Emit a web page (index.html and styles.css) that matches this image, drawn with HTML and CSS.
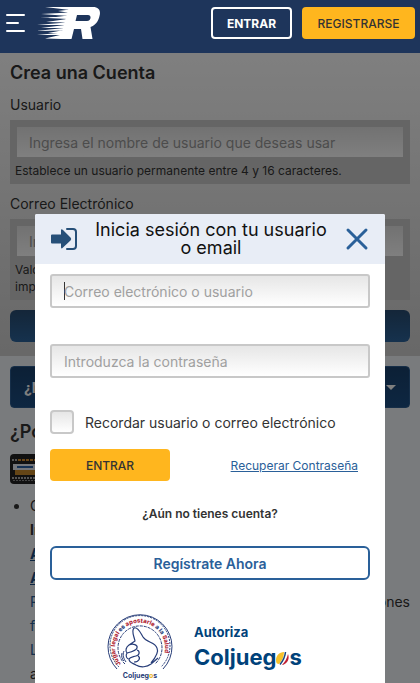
FILE: index.html
```html
<!DOCTYPE html>
<html lang="es">
<head>
    <meta charset="UTF-8">
    <meta name="viewport" content="width=device-width, initial-scale=1.0">
    <title>Crea una Cuenta</title>
    <link rel="stylesheet" href="styles.css">
</head>
<body>
    <header class="topbar">
        <button type="button" class="menu-btn" aria-label="Menú">
            <svg width="20" height="20" viewBox="0 0 20 20" stroke="#fff" stroke-width="2" stroke-linecap="round">
                <path d="M2 2h17M2 10h11M2 18h17"/>
            </svg>
        </button>
        <a href="#" class="logo" aria-label="Inicio">
            <svg width="64" height="32" viewBox="0 0 64 32">
                <path fill="#fff" fill-rule="evenodd" d="M33 0H57C63 0 65 4 63.500 9C62.500 14 59.500 18 54.500 20L56.500 32H46.500L45 22H38L35.500 32H24ZM41 8L39.500 14H51C55 14 56 8 52 8Z"/>
                <path fill="#fff" d="M9 0H35L34 3ZM22 4L34 2.500V6ZM5 7L33 5.500V9ZM12 11L32 8.500V12ZM4 10.500L31 9.500V11ZM10 15L31 12V15.500ZM1 18L30 15.500V18ZM5 21L29 18V21ZM0 24L28 21V23.500ZM12 26L28 23V26ZM1 28L27 25.500V28ZM9 31.500L26 27.500V32Z"/>
            </svg>
        </a>
        <button type="button" class="btn-outline">ENTRAR</button>
        <button type="button" class="btn-yellow btn-signup">REGISTRARSE</button>
    </header>

    <main>
        <form class="register">
            <h1>Crea una Cuenta</h1>

            <label for="reg-user">Usuario</label>
            <div class="field">
                <input type="text" id="reg-user" placeholder="Ingresa el nombre de usuario que deseas usar">
                <p>Establece un usuario permanente entre 4 y 16 caracteres.</p>
            </div>

            <label for="reg-email">Correo Electrónico</label>
            <div class="field">
                <input type="email" id="reg-email" placeholder="Ingresa tu correo">
                <p>Valoramos tu privacidad. Te enviaremos información<br>importante a este correo.</p>
            </div>

            <button type="submit" class="btn-next">Continuar</button>
        </form>

        <section class="info">
            <button type="button" class="accordion">
                <span>¿Necesitas ayuda?</span>
                <svg width="10" height="5" viewBox="0 0 10 5"><path fill="#fff" d="M0 0H10L5 5Z"/></svg>
            </button>
            <h2>¿Por qué jugar aquí?</h2>
            <svg class="promo" width="60" height="30" viewBox="0 0 60 30">
                <rect width="60" height="30" rx="4" fill="#222"/>
                <path stroke="#aaa" stroke-width="2" stroke-dasharray="2 1" d="M2 6h6M2 24h48"/>
                <path stroke="#888" stroke-width="1" stroke-dasharray="2 1" d="M3 26.500h44"/>
                <path stroke="#d08a30" stroke-width="2" stroke-dasharray="3 1" d="M8 6h36"/>
                <path fill="#e9edf4" d="M3 10h50v6H3z"/>
                <path fill="#c98a2c" d="M5 16h46v5H5z"/>
                <path stroke="#2a62a8" stroke-width="2" d="M7 13h16"/>
            </svg>
            <ul>
                <li>
                    Crea tu cuenta
                    <strong>Ingresa ya</strong>
                    <a href="#" class="strong">Apuestas</a>
                    <a href="#" class="strong">Acumulados</a>
                    <span class="split"><a href="#">Revisa</a> <span>promociones</span></span>
                    <a href="#">fútbol</a>
                    <a href="#">Ligas</a>
                    <span>apuestas</span>
                </li>
            </ul>
        </section>
    </main>

    <div class="overlay"></div>

    <div class="modal" role="dialog" aria-labelledby="login-title">
        <div class="modal-head">
            <svg width="26" height="22" viewBox="0 0 26 22">
                <path fill="#264f78" d="M1 6.500H10V2.500Q10 .500 12 2L19.500 9.500Q21 11 19.500 12.500L12 19.500Q10 21.500 10 19V15.500H1Q0 15.500 0 14.500V7.500Q0 6.500 1 6.500Z"/>
                <path fill="none" stroke="#264f78" stroke-width="2" stroke-linecap="round" d="M16 1H22Q25 1 25 4V18Q25 21 22 21H16"/>
            </svg>
            <h2 id="login-title">Inicia sesión con tu usuario o email</h2>
            <button type="button" class="close-btn" aria-label="Cerrar">
                <svg width="24" height="24" viewBox="0 0 24 24" stroke="#2a6099" stroke-width="3" stroke-linecap="round">
                    <path d="M3 3L21 21M21 3L3 21"/>
                </svg>
            </button>
        </div>

        <form class="login">
            <input type="text" class="text-input active" placeholder="Correo electrónico o usuario" aria-label="Correo electrónico o usuario">
            <input type="password" class="text-input" placeholder="Introduzca la contraseña" aria-label="Introduzca la contraseña">
            <div class="remember">
                <input type="checkbox" id="remember">
                <label for="remember">Recordar usuario o correo electrónico</label>
            </div>
            <div class="actions">
                <button type="submit" class="btn-yellow btn-login">ENTRAR</button>
                <a href="#">Recuperar Contraseña</a>
            </div>
            <p class="question">¿Aún no tienes cuenta?</p>
            <button type="button" class="btn-register">Regístrate Ahora</button>
        </form>

        <div class="license">
            <svg class="seal" width="66" height="68" viewBox="0 0 66 68">
                <defs>
                    <path id="ring" d="M14 50A25 25 0 1 1 52 50"/>
                </defs>
                <g fill="none" stroke="#273d78">
                    <path d="M10 55A32 32 0 1 1 56 55" stroke-width="1"/>
                    <path d="M12 53A30 30 0 1 1 54 53" stroke-width="1" stroke-dasharray="2 1"/>
                    <path d="M18 50A22 22 0 1 1 48 50" stroke-width="1" stroke-dasharray="3 1"/>
                    <path stroke-width="1.200" stroke-linejoin="round" d="M27 14C24 17 27 22 28 27L22 31C19 33 18 37 20 39C18 42 20 45 22 45C22 49 26 49 29 51C34 54 40 53 44 50L51 44M27 14C31 12 34 20 36 23C40 29 48 28 50 34C52 38 49 43 44 49M22 31C26 29 31 31 30 34C29 37 24 38 20 39M30 36C33 37 33 41 29 42C26 43 23 43 22 45M31 42C34 44 32 48 27 48"/>
                    <path d="M17 37C15 41 17 45 19 48M15 39C14 42 15 45 17 47"/>
                </g>
                <text class="seal-text" fill="#b01f35"><textPath href="#ring">Jugar legal <tspan fill="#273d78">es</tspan> apostarle <tspan fill="#273d78">a la</tspan> Salud</textPath></text>
                <text class="seal-name" x="33" y="64" text-anchor="middle" fill="#273d78">Coljueg<tspan fill="#e8b21c">o</tspan>s</text>
            </svg>
            <div class="license-text">
                <div class="authorized">Autoriza</div>
                <div class="brand">Coljueg<svg width="13" height="13" viewBox="0 0 13 13">
                    <path fill="#f6c12c" d="M8 0C3 0 0 4 0 8C0 11 1 12 3 12C6 9 8 5 8 0Z"/>
                    <path fill="none" stroke="#174780" stroke-width="1.500" d="M9.500 0C9 5 7 9 4 12.500"/>
                    <path fill="#c02032" d="M12 2C14 7 11 12 6 13C9 10 11 6 12 2Z"/>
                </svg>s</div>
            </div>
        </div>
    </div>
</body>
</html>
```
FILE: styles.css
```css
* {
    box-sizing: border-box;
}
body {
    font-family: Inter, "Open Sans", sans-serif;
    margin: 0;
    height: 100vh;
    overflow: hidden;
    background: #f3f6fa;
    color: #333;
}
h1, h2, p, ul {
    margin: 0;
}
button, input {
    font-family: inherit;
}
button {
    border: none;
    padding: 0;
    cursor: pointer;
}

/* header */
.topbar {
    display: flex;
    align-items: center;
    height: 53px;
    padding: 0 5px 7px;
    background: #1e355b;
}
.menu-btn {
    display: flex;
    background: none;
}
.logo {
    display: flex;
    margin: 0 auto 0 11px;
}
.btn-outline {
    width: 81px;
    height: 32px;
    margin-right: 10px;
    background: none;
    border: 2px solid #fff;
    border-radius: 4px;
    color: #fff;
    font-size: 12px;
    font-weight: 700;
}
.btn-yellow {
    height: 32px;
    background: #ffb61e;
    border-radius: 4px;
    color: #333;
    font-size: 12px;
    font-weight: 500;
}
.btn-signup {
    width: 113px;
}

/* register form */
.register {
    padding: 10px 10px 14px;
    background: linear-gradient(#fff, #d0d0d0);
}
.register h1 {
    font-size: 18px;
    line-height: 20px;
    font-weight: 600;
    margin-bottom: 12px;
}
.register label {
    display: block;
    font-size: 14px;
    line-height: 20px;
    margin-bottom: 5px;
}
.field {
    padding: 7px 7px 5px;
    margin-bottom: 10px;
    background: #cbcbcb;
}
.field input {
    display: block;
    width: 100%;
    height: 30px;
    padding: 0 12px;
    border: none;
    background: linear-gradient(#e4e4e4, #fff);
    font-size: 14px;
}
.field p {
    margin: 5px -2px 0;
    font-size: 12px;
    line-height: 17px;
}
.field input::placeholder {
    color: #999;
}
.btn-next {
    width: 100%;
    height: 32px;
    border-radius: 6px;
    background: linear-gradient(#284c72, #2c649c);
    color: #fff;
}

/* info */
.info {
    padding: 10px;
}
.accordion {
    display: flex;
    align-items: center;
    justify-content: space-between;
    width: 100%;
    height: 42px;
    padding: 0 13px;
    border: 1px solid #2c5d90;
    border-radius: 4px;
    background: linear-gradient(#18406c, #1c4e84);
    color: #fff;
    font-size: 14px;
    font-weight: 700;
}
.info h2 {
    margin: 12px 0 10px;
    font-size: 18px;
    line-height: 24px;
    font-weight: 600;
}
.promo {
    display: block;
}
.info ul {
    margin-top: 10px;
    padding-left: 20px;
    font-size: 14px;
    line-height: 24px;
}
.info li > * {
    display: block;
}
.info a {
    color: #2a6099;
    text-decoration: none;
}
.info a.strong {
    color: #1c4e84;
    font-weight: 700;
    text-decoration: underline;
}
.info .split {
    display: flex;
    justify-content: space-between;
}

/* login modal */
.overlay {
    position: fixed;
    inset: 53px 0 0;
    background: rgba(0, 0, 0, 0.5);
}
.modal {
    position: fixed;
    inset: 214px 35px 0;
    background: #fff;
    border-radius: 2px 2px 0 0;
    overflow: hidden;
}
.modal-head {
    display: flex;
    align-items: center;
    height: 50px;
    padding: 0 16px;
    background: #e8edf6;
}
.modal-head h2 {
    flex: 1;
    padding: 0 16px;
    color: #111;
    font-size: 18px;
    line-height: 18px;
    font-weight: 400;
    text-align: center;
}
.close-btn {
    display: flex;
    background: none;
}
.login {
    padding: 10px 15px 0;
}
.text-input {
    display: block;
    width: 100%;
    height: 34px;
    margin-bottom: 36px;
    padding: 0 12px;
    border: 2px solid #c8c8c8;
    border-radius: 3px;
    background: linear-gradient(#e6e6e6, #fff);
    font-size: 14px;
}
.text-input.active {
    background: linear-gradient(#333, #333) 12px 6px / 1px 18px no-repeat, linear-gradient(#e6e6e6, #fff);
}
.text-input::placeholder {
    color: #a0a0a0;
}
.remember {
    display: flex;
    align-items: center;
    gap: 11px;
    margin-top: -4px;
    font-size: 14px;
}
.remember input {
    appearance: none;
    width: 24px;
    height: 24px;
    margin: 0;
    border: 2px solid #c8c8c8;
    border-radius: 4px;
    background: linear-gradient(#e6e6e6, #fff);
}
.actions {
    display: flex;
    align-items: center;
    justify-content: space-between;
    margin-top: 15px;
    padding-right: 12px;
}
.btn-login {
    width: 120px;
}
.actions a {
    color: #2a6099;
    font-size: 12px;
}
.question {
    margin: 24px 0;
    font-size: 12px;
    line-height: 17px;
    font-weight: 600;
    text-align: center;
}
.btn-register {
    width: 100%;
    height: 34px;
    border: 2px solid #2a6099;
    border-radius: 6px;
    background: #fff;
    color: #2a6099;
    font-size: 14px;
    font-weight: 600;
}
.license {
    display: flex;
    gap: 21px;
    margin: 34px 0 0 72px;
    color: #00427a;
    font-weight: 700;
}
.seal-text {
    font-size: 6px;
    font-weight: 800;
}
.seal-name {
    font-size: 7px;
}
.authorized {
    margin-top: 10px;
    font-size: 13px;
    line-height: 16px;
}
.brand {
    font-size: 22px;
    line-height: 34px;
}
```
